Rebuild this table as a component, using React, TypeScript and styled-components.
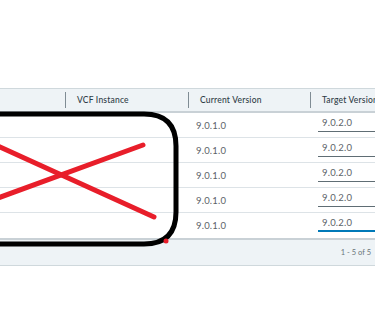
import React from "react";
import styled, { createGlobalStyle } from "styled-components";

const GlobalStyle = createGlobalStyle`
  html, body {
    margin: 0;
    padding: 0;
    background: #ffffff;
    overflow: hidden;
  }
  body {
    font-family: Lato, "Open Sans", Arial, sans-serif;
  }
`;

const Page = styled.div`
  position: relative;
  width: 375px;
  height: 313px;
  padding-top: 88px;
  box-sizing: border-box;
  overflow: hidden;
`;

const Table = styled.div`
  width: 400px;
  display: flex;
  flex-direction: column;
`;

const columns = "65px 123px 122px 1fr";

const HeaderRow = styled.div`
  display: grid;
  grid-template-columns: ${columns};
  height: 22px;
  background: #eef3f6;
  border-top: 1px solid #cfd8dc;
  border-bottom: 2px solid #c9d1d6;
`;

const HeaderCell = styled.div`
  display: flex;
  align-items: center;
  font-size: 8.5px;
  font-weight: 500;
  color: #2f3d47;
  letter-spacing: 0.2px;
`;

const Sep = styled.span`
  width: 1px;
  height: 16px;
  background: #7f8c94;
  margin-right: 11px;
`;

const BodyRow = styled.div<{ last?: boolean }>`
  display: grid;
  grid-template-columns: ${columns};
  height: 25px;
  border-bottom: ${(p) => (p.last ? "none" : "1px solid #dde3e7")};
  box-sizing: border-box;
`;

const Cell = styled.div`
  display: flex;
  align-items: center;
  padding-left: 8px;
  font-size: 9.5px;
  color: #5c6368;
  letter-spacing: 0.2px;
`;

const SelectCell = styled.div`
  display: flex;
  align-items: flex-start;
  padding-left: 8px;
  padding-top: 2px;
`;

const Select = styled.div<{ focused?: boolean }>`
  width: 80px;
  height: 17px;
  box-sizing: border-box;
  padding-left: 4px;
  padding-top: 2px;
  font-size: 9.5px;
  color: #5c6368;
  letter-spacing: 0.2px;
  border-bottom: ${(p) =>
    p.focused ? "2px solid #0079b8" : "1px solid #5f6d74"};
`;

const Footer = styled.div`
  height: 25px;
  background: #eef3f6;
  border-top: 2px solid #c9d1d6;
  border-bottom: 1px solid #cfd8dc;
  display: flex;
  align-items: center;
  justify-content: flex-end;
  padding-right: 29px;
  font-size: 7.5px;
  color: #6a7479;
`;

const Overlay = styled.svg`
  position: absolute;
  top: 0;
  left: 0;
  pointer-events: none;
`;

const rows = [1, 2, 3, 4, 5];

export default function App() {
  return (
    <>
      <GlobalStyle />
      <Page>
        <Table>
          <HeaderRow>
            <HeaderCell />
            <HeaderCell>
              <Sep />
              VCF Instance
            </HeaderCell>
            <HeaderCell>
              <Sep />
              Current Version
            </HeaderCell>
            <HeaderCell>
              <Sep />
              Target Version
            </HeaderCell>
          </HeaderRow>
          {rows.map((r) => (
            <BodyRow key={r} last={r === rows.length}>
              <Cell />
              <Cell />
              <Cell>9.0.1.0</Cell>
              <SelectCell>
                <Select focused={r === rows.length}>9.0.2.0</Select>
              </SelectCell>
            </BodyRow>
          ))}
          <Footer>1 - 5 of 5</Footer>
        </Table>
        <Overlay width="375" height="313" viewBox="0 0 375 313">
          <path
            d="M -20 114 L 144 114 Q 176 114 176 146 L 176 212 Q 176 244 144 244 L -20 244"
            fill="none"
            stroke="#000"
            strokeWidth="5"
          />
          <line x1="-2" y1="146" x2="154" y2="217" stroke="#e81e2a" strokeWidth="5" strokeLinecap="round" />
          <line x1="-2" y1="198" x2="143" y2="145" stroke="#e81e2a" strokeWidth="5" strokeLinecap="round" />
          <circle cx="166" cy="241" r="2.5" fill="#e81e2a" />
        </Overlay>
      </Page>
    </>
  );
}
